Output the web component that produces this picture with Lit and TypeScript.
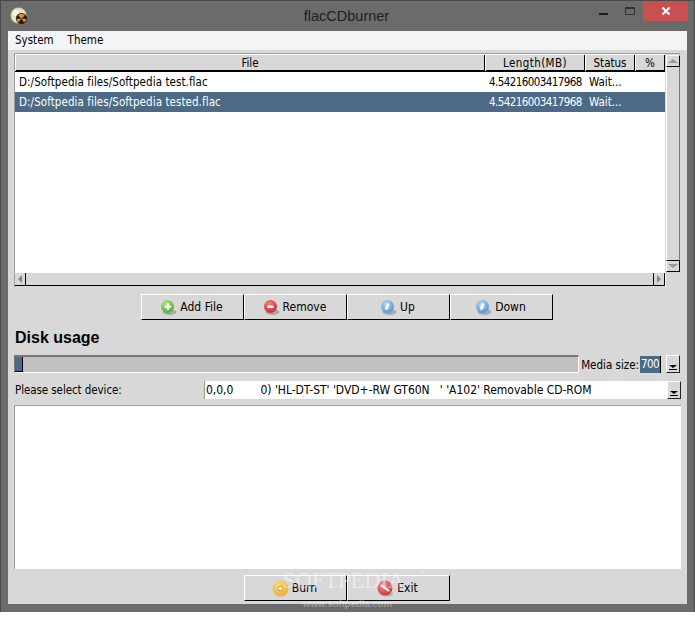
import { LitElement, html, css, svg } from "lit";
import { customElement } from "lit/decorators.js";

const orb = (id: string, a: string, b: string, mark: unknown) => html`<svg class="ic" width="17" height="17" viewBox="0 0 17 17">
  <defs><radialGradient id="${id}" cx=".4" cy=".3" r=".8"><stop offset="0" stop-color="${b}"/><stop offset="1" stop-color="${a}"/></radialGradient></defs>
  <ellipse cx="9.500" cy="13" rx="7" ry="3" fill="#aaa"/>
  <circle cx="7.500" cy="7.500" r="6.500" fill="url(#${id})"/>
  ${mark}
</svg>`;
const plus = svg`<path d="M8 4.500v6.500M4.800 7.800h6.400" stroke="#fff" stroke-width="2"/>`;
const minus = svg`<path d="M4.500 7.800h6" stroke="#fff" stroke-width="2.400"/>`;
const gem = svg`<ellipse cx="7.200" cy="7.500" rx="1.800" ry="3.600" fill="#f2f8ff" transform="rotate(18 7.200 7.500)"/>`;
const burn = html`<svg class="ic" width="17" height="17" viewBox="0 0 17 17"><defs><radialGradient id="bg" cx=".4" cy=".3" r=".8"><stop offset="0" stop-color="#fbdc83"/><stop offset="1" stop-color="#eaa92c"/></radialGradient></defs><circle cx="8.500" cy="8.500" r="8" fill="url(#bg)"/><circle cx="8.500" cy="8.500" r="2.500" fill="#fff2c8" stroke="#d3982a"/></svg>`;
const exit = html`<svg class="ic" width="17" height="17" viewBox="0 0 17 17"><defs><radialGradient id="eg" cx=".4" cy=".3" r=".8"><stop offset="0" stop-color="#f09090"/><stop offset="1" stop-color="#c92f30"/></radialGradient></defs><ellipse cx="9.500" cy="14" rx="6.500" ry="2.500" fill="#b0b0b0"/><circle cx="8" cy="8" r="7.500" fill="url(#eg)"/><path d="M4 5l8 6" stroke="#fff" stroke-width="2"/></svg>`;

@customElement("app-root")
export class AppRoot extends LitElement {
  static styles = css`
    :host { display: block; width: 695px; height: 621px; background: #fff; overflow: hidden;
      font: 11.500px/1.2 "DejaVu Sans Condensed", "DejaVu Sans", sans-serif; color: #000; }
    .win { height: 612px; box-sizing: border-box; background: #6b6b6b; border: 1px solid #4a4a4a; border-bottom: 0;
      display: flex; flex-direction: column; padding: 0 7px 8px; }
    .title { height: 30px; flex: none; display: flex; align-items: center; position: relative; margin: 0 -7px; }
    .logo { position: absolute; left: 9px; top: 6px; }
    .cap { flex: 1; text-align: center; font: 14.500px "Liberation Sans", Arial, sans-serif; color: #111; opacity: .85; padding-right: 2px; }
    .wb { position: absolute; display: block; }
    .close { left: 642px; top: 0; width: 45px; height: 20px; background: #c75050; display: flex; align-items: center; justify-content: center; }
    .min { left: 598px; top: 12px; width: 9px; height: 2px; background: #1a1a1a; }
    .max { left: 624px; top: 6px; width: 8px; height: 5px; border: 1px solid #333; border-top-width: 2px; }
    .client { flex: 1; background: #d8d8d8; display: flex; flex-direction: column; min-height: 0; }
    .menu { height: 19px; flex: none; background: #f3f4f6; display: flex; gap: 14px; padding: 0 7px; box-sizing: border-box; align-items: center; }
    .area { flex: none; margin: 3px 7px 0 6px; height: 234px; display: grid;
      grid-template-columns: 1fr 15px; grid-template-rows: 1fr 15px; border-top: 1px solid #a0a0a0; border-left: 1px solid #a0a0a0; box-sizing: border-box; }
    .list { background: #fff; display: flex; flex-direction: column; min-width: 0; }
    .hdr { display: grid; grid-template-columns: 470px 100px 50px 30px; height: 15px; margin-top: 1px; background: #d8d8d8; border-bottom: 2px solid #000; flex: none; line-height: 16px; text-align: center; }
    .hdr div { border-right: 1px solid #000; border-left: 1px solid #fff; box-sizing: border-box; }
    .hdr .wide { letter-spacing: .4px; }
    .row { display: grid; grid-template-columns: 470px 100px 50px 30px; height: 20px; line-height: 20px; flex: none; }
    .row div { padding-left: 4px; white-space: nowrap; overflow: hidden; }
    .row .path { letter-spacing: .07px; }
    .row .num { letter-spacing: -.58px; }
    .sel { background: #4c6a86; color: #fff; }
    .vs { background: #d8d8d8; display: flex; flex-direction: column; margin-left: 1px; margin-top: 1px; }
    .hs { background: #d8d8d8; display: flex; border-top: 1px solid #fff; border-bottom: 1px solid #000; height: 14px; box-sizing: border-box; }
    .corner { background: #d8d8d8; border-left: 1px solid #fff; }
    .sb { width: 12px; height: 12px; flex: none; display: flex; align-items: center; justify-content: center; box-sizing: border-box; background: #d8d8d8; }
    .vs .sb { width: 14px; border: 1px solid #000; border-left-color: #fff; }
    .vs .sb.up { border-color: #fff #000 #000 #fff; }
    .hs .sb { border: 0 solid #000; border-left: 1px solid #fff; }
    .hs .sb.lft { border-right-width: 1px; width: 11px; border-left: 0; }
    .hs .sb.rgt { border-left: 1px solid #000; border-right: 1px solid #000; }
    .thumb { flex: 1; background: #d8d8d8; }
    .vs .thumb { border-left: 1px solid #fff; border-right: 1px solid #777; }
    .tri { width: 0; height: 0; border: 4px solid transparent; display: block; }
    .tri.u { border-bottom: 4px solid #999; border-top: 0; border-left-width: 5px; border-right-width: 5px; }
    .tri.d { border-top: 4px solid #999; border-bottom: 0; border-left-width: 5px; border-right-width: 5px; }
    .tri.l { border-right: 4px solid #888; border-left: 0; }
    .tri.r { border-left: 4px solid #888; border-right: 0; }
    .bar { display: flex; justify-content: center; flex: none; }
    .top-bar { margin-top: 7px; padding-right: 1px; }
    .btn { width: 103px; height: 26px; box-sizing: border-box; background: #d8d8d8; border: 1px solid; border-color: #fff #000 #000 #fff;
      display: flex; align-items: center; justify-content: center; gap: 3px; font-size: 12px; padding-right: 2px; }
    .ic { flex: none; }
    h2 { margin: 8px 0 0 7px; font: bold 16px/20px "Liberation Sans", Arial, sans-serif; flex: none; height: 20px; }
    .row2 { display: flex; flex: none; margin: 7px 7px 0 6px; height: 18px; align-items: stretch; }
    .progress { width: 566px; box-sizing: border-box; background: #c0c0c0; border: 1px solid; border-color: #777 #fff #fff #777; border-width: 2px 1px 1px 1px; }
    .chunk { width: 8px; height: 100%; background: #4c6a86; box-sizing: border-box; border-right: 1px solid #000; border-bottom: 1px solid #000; }
    .ms { width: 61px; padding: 3px 0 0 2px; box-sizing: border-box; white-space: nowrap; line-height: 15px; }
    .spin { width: 21px; background: #4c6a86; color: #fff; line-height: 17px; text-align: center; height: 17px; margin-top: 1px; box-sizing: border-box; border-right: 1px solid #000; letter-spacing: -.5px; }
    .arrow { width: 14px; height: 18px; margin-left: 5px; box-sizing: border-box; border: 1px solid; border-color: #fff #222 #222 #fff; background: #d8d8d8; display: flex; flex-direction: column; align-items: center; justify-content: flex-end; gap: 1px; padding-bottom: 2px; }
    .arrow i { display: block; width: 0; height: 0; border-top: 3px solid #000; border-left: 4px solid transparent; border-right: 4px solid transparent; }
    .arrow b { display: block; width: 8px; height: 1px; background: #000; }
    .row3 { display: flex; flex: none; margin: 8px 6px 0 7px; height: 18px; }
    .lbl { width: 189px; line-height: 18px; letter-spacing: -.08px; }
    .combo { flex: 1; background: #fff; display: flex; justify-content: space-between; line-height: 18px; padding-left: 1px; border-left: 1px solid #999; white-space: pre; font-size: 12px; letter-spacing: -.03px; }
    .combo .arrow { margin: 0; }
    .log { flex: none; height: 164px; margin: 6px 6px 0 6px; background: #fff; border-top: 1px solid #a0a0a0; border-left: 1px solid #a0a0a0; box-sizing: border-box; }
    .bottom { margin-top: 6px; position: relative; padding-right: 1px; }
    .wm { position: absolute; left: 275px; top: -6px; font: 22.500px/24px "Liberation Serif", serif; color: rgba(255,255,255,.45); white-space: nowrap; }
    .tm { position: absolute; left: 409px; top: -7px; font: 5px/8px "Liberation Sans", sans-serif; color: rgba(255,255,255,.45); }
    .wm2 { position: absolute; left: 295px; top: 23px; font: bold 9.500px/12px "Liberation Sans", sans-serif; color: rgba(255,255,255,.35); white-space: nowrap; }
  `;
  render() {
    const B = (i: unknown, t: string) => html`<div class="btn">${i}<span>${t}</span></div>`;
    return html`<div class="win">
      <div class="title">
        <svg class="logo" width="17" height="17" viewBox="0 0 17 17">
          <circle cx="8.500" cy="8.500" r="8" fill="#e7e0c8" stroke="#8a8468" stroke-width=".5"/>
          <circle cx="6" cy="6" r="3" fill="#fff" opacity=".7"/>
          <circle cx="11.500" cy="11.500" r="5.500" fill="#1f1a12"/>
          <path d="M11.500 11.500L8 8.500a4.500 4.500 0 0 1 7 0zM11.500 11.500l-3 4a5 5 0 0 1-2-3.500zM11.500 11.500l5 .5a5 5 0 0 1-2.500 3.500z" fill="#e58a1f"/>
        </svg>
        <div class="cap">flacCDburner</div>
        <span class="wb min"></span><span class="wb max"></span>
        <span class="wb close"><svg width="10" height="10" viewBox="0 0 10 10"><path d="M1.500 1.500l7 7M8.500 1.500l-7 7" stroke="#fff" stroke-width="2"/></svg></span>
      </div>
      <div class="client">
        <div class="menu"><span>System</span><span>Theme</span></div>
        <div class="area">
          <div class="list">
            <div class="hdr"><div>File</div><div class="wide">Length(MB)</div><div>Status</div><div>%</div></div>
            <div class="row"><div class="path">D:/Softpedia files/Softpedia test.flac</div><div class="num">4.54216003417968</div><div>Wait...</div><div></div></div>
            <div class="row sel"><div class="path">D:/Softpedia files/Softpedia tested.flac</div><div class="num">4.54216003417968</div><div>Wait...</div><div></div></div>
          </div>
          <div class="vs">
            <div class="sb up"><i class="tri u"></i></div>
            <div class="thumb"></div>
            <div class="sb"><i class="tri d"></i></div>
          </div>
          <div class="hs">
            <div class="sb lft"><i class="tri l"></i></div>
            <div class="thumb"></div>
            <div class="sb rgt"><i class="tri r"></i></div>
          </div>
          <div class="corner"></div>
        </div>
        <div class="bar top-bar">
          ${B(orb("o1", "#45a52c", "#b5ea80", plus), "Add File")}
          ${B(orb("o2", "#c81e28", "#f48080", minus), "Remove")}
          ${B(orb("o3", "#4a8cd4", "#b4d8f4", gem), "Up")}
          ${B(orb("o4", "#4a8cd4", "#b4d8f4", gem), "Down")}
        </div>
        <h2>Disk usage</h2>
        <div class="row2">
          <div class="progress"><div class="chunk"></div></div>
          <div class="ms">Media size:</div>
          <div class="spin">700</div>
          <div class="arrow"><i></i><b></b></div>
        </div>
        <div class="row3">
          <div class="lbl">Please select device:</div>
          <div class="combo"><span>0,0,0        0) 'HL-DT-ST' 'DVD+-RW GT60N   ' 'A102' Removable CD-ROM</span><div class="arrow"><i></i><b></b></div></div>
        </div>
        <div class="log"></div>
        <div class="bar bottom">
          ${B(burn, "Burn")}
          ${B(exit, "Exit")}
          <div class="wm">SOFTPEDIA</div>
          <div class="tm">TM</div>
          <div class="wm2">www.softpedia.com</div>
        </div>
      </div>
    </div>`;
  }
}
